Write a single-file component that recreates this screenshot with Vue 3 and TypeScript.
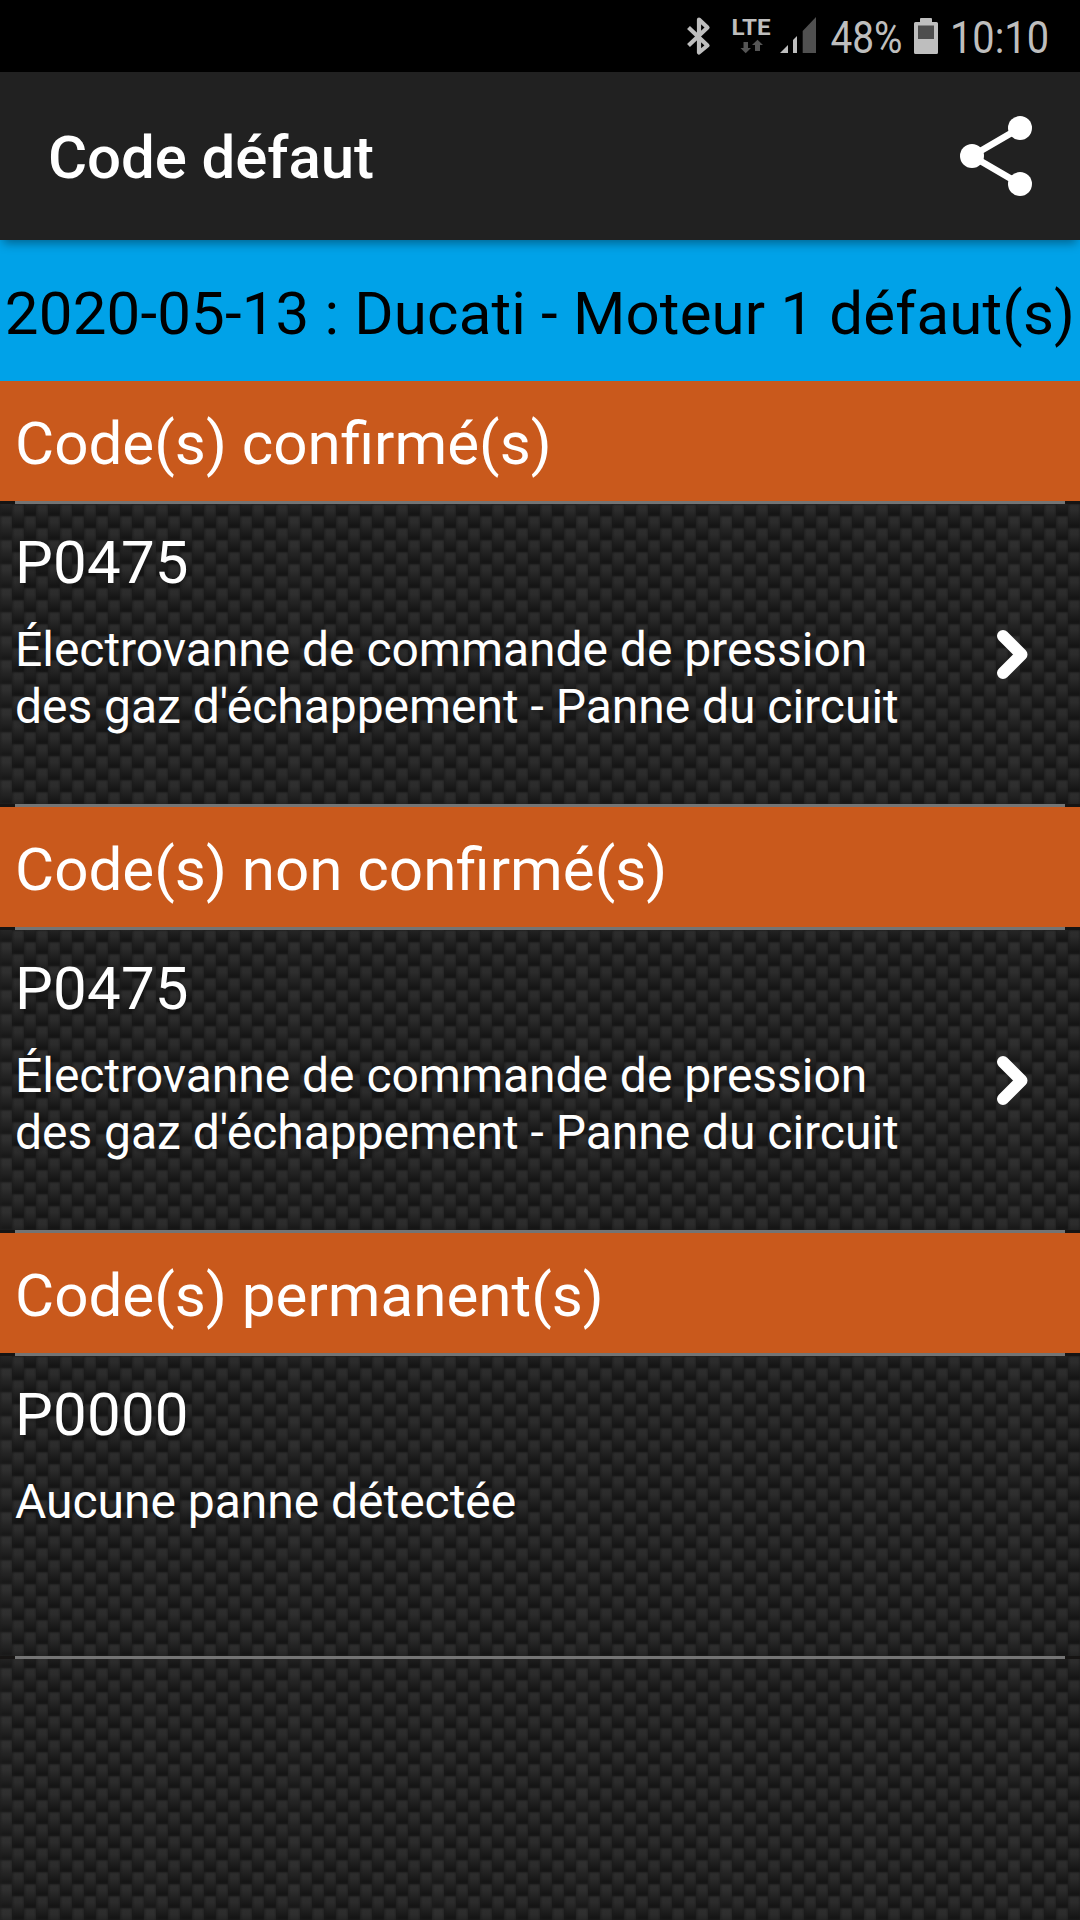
<script setup lang="ts">
interface FaultCode {
  code: string
  description: string[]
  hasDetail: boolean
}

interface FaultSection {
  title: string
  fault: FaultCode
}

const exhaustFault: FaultCode = {
  code: 'P0475',
  description: [
    'Électrovanne de commande de pression',
    "des gaz d'échappement - Panne du circuit",
  ],
  hasDetail: true,
}

const sections: FaultSection[] = [
  { title: 'Code(s) confirmé(s)', fault: exhaustFault },
  { title: 'Code(s) non confirmé(s)', fault: exhaustFault },
  {
    title: 'Code(s) permanent(s)',
    fault: { code: 'P0000', description: ['Aucune panne détectée'], hasDetail: false },
  },
]
</script>

<template>
  <div class="screen">
    <div class="status-bar">
      <svg class="status-icons" width="400" height="72" viewBox="680 0 400 72">
        <path
          d="M688.5 27.5 L707.5 45.5 L699 52.5 V19.5 L707.5 27.5 L688.5 45.5"
          fill="none"
          stroke="#bebebe"
          stroke-width="4.2"
          stroke-linejoin="round"
        />
        <text x="731.5" y="35" class="lte" textLength="39" lengthAdjust="spacingAndGlyphs">LTE</text>
        <path d="M743.5 42 h4.5 v6 h3 l-5.3 5.3 l-5.2 -5.3 h3z" fill="#555" />
        <path d="M755 51 h5 v-6 h3 l-5.5 -5.3 l-5.5 5.3 h3z" fill="#555" />
        <path d="M780 53 L788 45 V53Z M793 53 V40 L797 36 V53Z" fill="#bebebe" />
        <path d="M802.7 53 V31 L816 17 V53Z" fill="#505050" />
        <text x="830.5" y="53" class="status-text" textLength="72" lengthAdjust="spacingAndGlyphs">48%</text>
        <path
          d="M921 18 h10 q1 0 1 1 v3 h4.5 q1.5 0 1.5 1.5 v29 q0 1.5 -1.5 1.5 h-21 q-1.5 0 -1.5 -1.5 v-29 q0 -1.5 1.5 -1.5 h4.5 v-3 q0 -1 1 -1z"
          fill="#bebebe"
        />
        <rect x="918" y="25.5" width="16" height="13.5" fill="#4d4d4d" />
        <text x="950" y="53" class="status-text" textLength="99" lengthAdjust="spacingAndGlyphs">10:10</text>
      </svg>
    </div>

    <header class="action-bar">
      <h1>Code défaut</h1>
      <svg class="share" width="80" height="80" viewBox="0 0 80 80" fill="#fff">
        <path d="M64 12 L16 40 L64 68" fill="none" stroke="#fff" stroke-width="6.6" />
        <circle cx="64" cy="12" r="12" />
        <circle cx="16" cy="40" r="12" />
        <circle cx="64" cy="68" r="12" />
      </svg>
    </header>

    <div class="summary">2020-05-13 : Ducati - Moteur 1 défaut(s)</div>

    <main>
      <section v-for="section in sections" :key="section.title">
        <h2>{{ section.title }}</h2>
        <div class="divider"></div>
        <article class="fault carbon">
          <div class="fault-body">
            <div class="code">{{ section.fault.code }}</div>
            <p>
              <span v-for="line in section.fault.description" :key="line">{{ line }}</span>
            </p>
          </div>
          <svg v-if="section.fault.hasDetail" class="chevron" width="40" height="60" viewBox="0 0 40 60">
            <path
              d="M11 12 L29.5 30.5 L11 49"
              fill="none"
              stroke="#fff"
              stroke-width="12"
              stroke-linecap="round"
              stroke-linejoin="round"
            />
          </svg>
        </article>
        <div class="divider"></div>
      </section>
    </main>
    <div class="rest carbon"></div>
  </div>
</template>

<style>
body {
  margin: 0;
  background: #1b1b1b;
}
</style>

<style scoped>
.screen {
  display: flex;
  flex-direction: column;
  width: 1080px;
  height: 1920px;
  overflow: hidden;
  background: #161413;
  color: #fff;
  font-family: Roboto, 'Liberation Sans', sans-serif;
}

.status-bar {
  display: flex;
  justify-content: flex-end;
  flex: none;
  height: 72px;
  background: #000;
}

.status-text {
  font-size: 44px;
  fill: #bebebe;
}

.lte {
  font-size: 22.5px;
  font-weight: 700;
  fill: #bebebe;
}

.action-bar {
  position: relative;
  display: flex;
  align-items: center;
  justify-content: space-between;
  flex: none;
  box-sizing: border-box;
  height: 168px;
  padding: 0 44px 0 48px;
  background: #212121;
  box-shadow: 0 6px 10px -3px rgba(0, 0, 0, 0.4);
}

h1 {
  margin: 0;
  padding-top: 4px;
  font-size: 60px;
  font-weight: 500;
  letter-spacing: -0.1px;
  line-height: 70px;
  white-space: nowrap;
}

.share {
  overflow: visible;
}

.summary {
  flex: none;
  box-sizing: border-box;
  height: 141px;
  padding-top: 6px;
  background: #00a2e8;
  color: #000;
  font-size: 60px;
  letter-spacing: 0.17px;
  line-height: 135px;
  text-align: center;
  white-space: nowrap;
}

h2 {
  box-sizing: border-box;
  height: 120px;
  margin: 0;
  padding: 5px 0 0 15px;
  background: #c9591c;
  font-size: 60.15px;
  font-weight: 400;
  line-height: 115px;
  white-space: nowrap;
}

.divider {
  height: 3px;
  margin: 0 15px;
  background: #747474;
}

/* Woven texture: two sets of 12px columns, shifted by half a period. */
.carbon {
  position: relative;
  isolation: isolate;
  background: #1e1e1e;
}

.carbon::before,
.carbon::after {
  content: '';
  position: absolute;
  inset: 0;
  z-index: -1;
  background-image:
    linear-gradient(90deg, rgba(255, 255, 255, 0.015) 12px, transparent 12px),
    linear-gradient(90deg, rgba(26, 26, 26, 0.6), rgba(26, 26, 26, 0) 3px, rgba(26, 26, 26, 0) 10px, rgba(26, 26, 26, 0.5)),
    linear-gradient(#202020 0, #2d2d2d 2px, #2b2b2b 7px, #222 13px, #141414 22px, #191919 24px);
  background-size: 144px 144px, 12px 24px, 24px 24px;
  background-position: 0 0, 0 0, 0 12px;
}

.carbon::after {
  background-position: 0 0, 0 0, 0 0;
  -webkit-mask-image: repeating-linear-gradient(90deg, transparent 0 12px, #000 12px 24px);
  mask-image: repeating-linear-gradient(90deg, transparent 0 12px, #000 12px 24px);
}

/* The page weave repeats from the bottom edge of the action bar. */
.rest::before {
  background-position: 0 0, 0 0, 0 9px;
}

.rest::after {
  background-position: 0 0, 0 0, 0 21px;
}

.fault {
  display: flex;
  box-sizing: border-box;
  height: 300px;
  padding: 24px 48px 0 15px;
}

.rest {
  flex: 1;
}

.fault-body {
  flex: 1;
  text-shadow: 1px 3px 4px rgba(0, 0, 0, 0.3);
}

.code {
  font-size: 60px;
  letter-spacing: 0.2px;
  line-height: 70px;
}

p {
  margin: 23px 0 0;
  font-size: 48px;
  letter-spacing: -0.03px;
  line-height: 57px;
}

p span {
  display: block;
  white-space: nowrap;
}

.chevron {
  flex: none;
  margin-top: 96px;
}
</style>
